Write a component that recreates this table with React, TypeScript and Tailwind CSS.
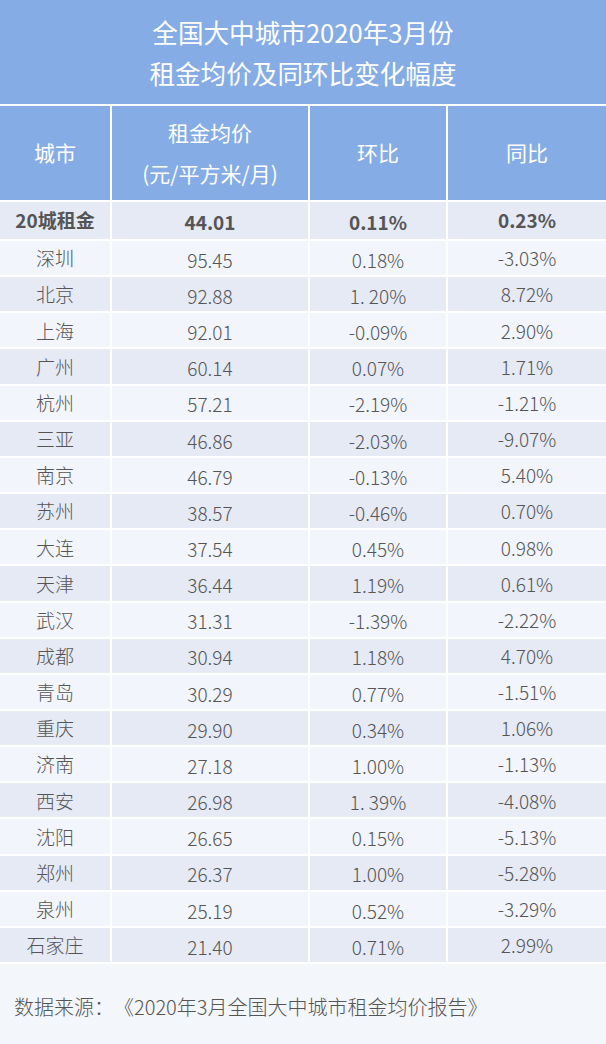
const rows: [string, string, string, string][] = [
  ["深圳", "95.45", "0.18%", "-3.03%"],
  ["北京", "92.88", "1. 20%", "8.72%"],
  ["上海", "92.01", "-0.09%", "2.90%"],
  ["广州", "60.14", "0.07%", "1.71%"],
  ["杭州", "57.21", "-2.19%", "-1.21%"],
  ["三亚", "46.86", "-2.03%", "-9.07%"],
  ["南京", "46.79", "-0.13%", "5.40%"],
  ["苏州", "38.57", "-0.46%", "0.70%"],
  ["大连", "37.54", "0.45%", "0.98%"],
  ["天津", "36.44", "1.19%", "0.61%"],
  ["武汉", "31.31", "-1.39%", "-2.22%"],
  ["成都", "30.94", "1.18%", "4.70%"],
  ["青岛", "30.29", "0.77%", "-1.51%"],
  ["重庆", "29.90", "0.34%", "1.06%"],
  ["济南", "27.18", "1.00%", "-1.13%"],
  ["西安", "26.98", "1. 39%", "-4.08%"],
  ["沈阳", "26.65", "0.15%", "-5.13%"],
  ["郑州", "26.37", "1.00%", "-5.28%"],
  ["泉州", "25.19", "0.52%", "-3.29%"],
  ["石家庄", "21.40", "0.71%", "2.99%"],
];

const font = { fontFamily: '"Noto Sans CJK SC", "Noto Sans", sans-serif' };

export default function App() {
  return (
    <div className="w-[606px] h-[1044px] bg-[#f3f6fb] text-[#555555] overflow-hidden" style={font}>
      {/* Title */}
      <div className="h-[104px] bg-[#85ace4] flex flex-col items-center justify-center text-white text-[25.6px] leading-[41px] font-normal">
        <div>全国大中城市2020年3月份</div>
        <div>租金均价及同环比变化幅度</div>
      </div>

      {/* Table */}
      <div className="h-[860px] bg-white py-[2px] grid grid-cols-[110px_196px_136px_1fr] grid-rows-[94px_37px_repeat(20,minmax(0,1fr))] gap-[2px]">
        <div className="bg-[#85ace4] text-white text-[21px] flex items-center justify-center">城市</div>
        <div className="bg-[#85ace4] text-white text-[21px] leading-[41px] flex flex-col items-center justify-center">
          <div>租金均价</div>
          <div>(元/平方米/月)</div>
        </div>
        <div className="bg-[#85ace4] text-white text-[21px] flex items-center justify-center">环比</div>
        <div className="bg-[#85ace4] text-white text-[21px] flex items-center justify-center">同比</div>

        <div className="bg-[#e5eaf5] text-[19px] font-bold flex items-center justify-center">20城租金</div>
        <div className="bg-[#e5eaf5] text-[19px] font-bold flex items-center justify-center pt-[3px]">44.01</div>
        <div className="bg-[#e5eaf5] text-[19px] font-bold flex items-center justify-center pt-[3px]">0.11%</div>
        <div className="bg-[#e5eaf5] text-[19px] font-bold flex items-center justify-center">0.23%</div>

        {rows.map((r, i) =>
          r.map((cell, j) => (
            <div
              key={i + "-" + j}
              className={
                (i % 2 === 0 ? "bg-[#f2f5fb]" : "bg-[#e5eaf5]") +
                (j === 1 || j === 2 ? " pt-[4px]" : " pt-[1px]") +
                " text-[19px] font-light flex items-center justify-center"
              }
            >
              {cell}
            </div>
          ))
        )}
      </div>

      {/* Source */}
      <div className="h-[80px] pl-[14px] pt-[6px] flex items-center text-[20px] font-light">
        <span>数据来源：</span>
        <span>《2020年3月全国大中城市租金均价报告》</span>
      </div>
    </div>
  );
}
